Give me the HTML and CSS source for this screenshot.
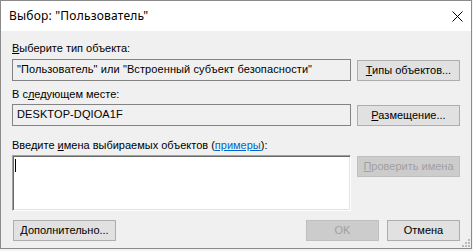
FILE: index.html
```html
<!DOCTYPE html>
<html lang="ru">
<head>
<meta charset="utf-8">
<title>Выбор: "Пользователь"</title>
<link rel="stylesheet" href="styles.css">
</head>
<body>
<div class="window">
  <div class="titlebar">
    <span class="title">Выбор: "Пользователь"</span>
    <svg class="close" width="11" height="11" viewBox="0 0 11 11"><path d="M0.5 0.5 L10.5 10.5 M10.5 0.5 L0.5 10.5" stroke="#000" stroke-width="1" fill="none"/></svg>
  </div>
  <div class="content">
    <div class="field first">
      <div class="label"><u>В</u>ыберите тип объекта:</div>
      <div class="row">
        <div class="box">"Пользователь" или "Встроенный субъект безопасности"</div>
        <button class="btn"><u>Т</u>ипы объектов...</button>
      </div>
    </div>
    <div class="field second">
      <div class="label">В с<u>л</u>едующем месте:</div>
      <div class="row">
        <div class="box">DESKTOP-DQIOA1F</div>
        <button class="btn"><u>Р</u>азмещение...</button>
      </div>
    </div>
    <div class="field third">
      <div class="label">Введите <u>и</u>мена выбираемых объектов (<a class="link" href="#">примеры</a>):</div>
      <div class="row top">
        <div class="names"><span class="caret"></span></div>
        <button class="btn disabled"><u>П</u>роверить имена</button>
      </div>
    </div>
    <div class="footer">
      <button class="btn extra"><u>Д</u>ополнительно...</button>
      <div class="actions">
        <button class="btn small disabled">OK</button>
        <button class="btn small">Отмена</button>
      </div>
    </div>
  </div>
  <svg class="grip" width="8" height="8" viewBox="0 0 8 8" fill="#b9b9b9">
    <rect x="6" y="0" width="2" height="2"/>
    <rect x="3" y="3" width="2" height="2"/>
    <rect x="6" y="3" width="2" height="2"/>
    <rect x="0" y="6" width="2" height="2"/>
    <rect x="3" y="6" width="2" height="2"/>
    <rect x="6" y="6" width="2" height="2"/>
  </svg>
</div>
</body>
</html>
```

FILE: styles.css
```css
html, body {
  margin: 0;
  padding: 0;
  background: #f4f4f4;
}

.window {
  position: relative;
  width: 470px;
  height: 247px;
  border: 1px solid #8a8a8a;
  display: flex;
  flex-direction: column;
  font-family: "Liberation Sans", Arial, sans-serif;
  font-size: 11px;
  color: #000;
}

.titlebar {
  height: 30px;
  flex: none;
  background: #fff;
  display: flex;
  align-items: center;
  padding-left: 8px;
  padding-right: 8px;
}

.title {
  font-family: "Noto Sans", "Open Sans", sans-serif;
  font-size: 12px;
  line-height: 16px;
  letter-spacing: 0.2px;
  color: #000;
}

.close {
  margin-left: auto;
  display: block;
}

.content {
  flex: 1;
  background: #f0f0f0;
  padding: 11px 11px 0 11px;
  display: flex;
  flex-direction: column;
}

.label {
  height: 13px;
  line-height: 13px;
  white-space: nowrap;
}

.first .label { margin-bottom: 4px; }
.second { margin-top: 7px; }
.second .label { margin-bottom: 3px; }
.third { margin-top: 13px; }
.third .label { margin-bottom: 3px; }

.row {
  display: flex;
  gap: 6px;
  align-items: flex-start;
}

.box {
  box-sizing: border-box;
  width: 339px;
  height: 22px;
  border: 1px solid #838383;
  background: #f0f0f0;
  padding-left: 4px;
  line-height: 19px;
  white-space: nowrap;
  overflow: hidden;
  letter-spacing: 0.1px;
}

.btn {
  box-sizing: border-box;
  width: 103px;
  height: 21px;
  margin-top: 1px;
  padding: 0;
  border: 1px solid #adadad;
  background: #e1e1e1;
  font-family: "Liberation Sans", Arial, sans-serif;
  font-size: 11px;
  line-height: 19px;
  color: #000;
  text-align: center;
  white-space: nowrap;
}

.btn.disabled {
  background: #cccccc;
  border-color: #bfbfbf;
  color: #a0a0a0;
}

.names {
  box-sizing: border-box;
  width: 339px;
  height: 56px;
  background: #fff;
  border: 1px solid;
  border-color: #a0a0a0 #ffffff #ffffff #a0a0a0;
  box-shadow: inset 1px 1px 0 #696969, inset -1px -1px 0 #e3e3e3;
  padding: 3px 0 0 2px;
}

.caret {
  display: block;
  width: 1px;
  height: 13px;
  background: #000;
}

.link {
  color: #0066cc;
  text-decoration: underline;
}

.footer {
  margin-top: 9px;
  display: flex;
  justify-content: space-between;
  align-items: flex-start;
}

.footer .btn { margin-top: 0; }

.extra { margin-left: 1px; }

.actions {
  display: flex;
  gap: 8px;
}

.btn.small { width: 73px; }

.grip {
  position: absolute;
  right: 1px;
  bottom: 1px;
  display: block;
}
```
